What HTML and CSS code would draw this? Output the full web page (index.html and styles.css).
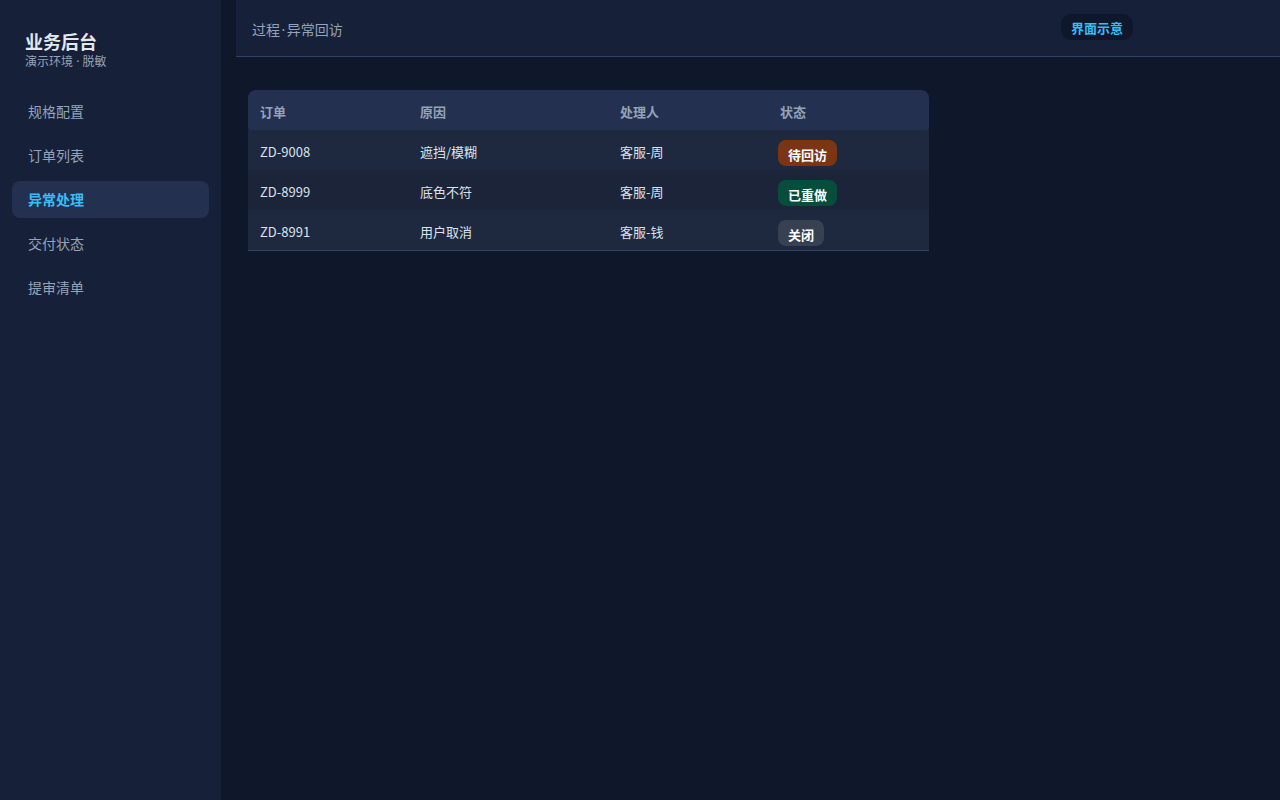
FILE: index.html
```html
<!DOCTYPE html>
<html lang="zh-CN">
<head>
<meta charset="utf-8">
<title>业务后台</title>
<link rel="stylesheet" href="styles.css">
</head>
<body>
<div class="app">
  <aside class="sidebar">
    <div class="brand">
      <div class="brand-title">业务后台</div>
      <div class="brand-sub">演示环境<span class="dot"> · </span>脱敏</div>
    </div>
    <nav class="nav">
      <a class="nav-item">规格配置</a>
      <a class="nav-item">订单列表</a>
      <a class="nav-item active">异常处理</a>
      <a class="nav-item">交付状态</a>
      <a class="nav-item">提审清单</a>
    </nav>
  </aside>
  <main class="main">
    <header class="topbar">
      <div class="crumb">过程<span class="dot crumb-dot">·</span>异常回访</div>
      <span class="tag">界面示意</span>
    </header>
    <section class="content">
      <table class="grid">
        <thead>
          <tr><th class="c1">订单</th><th class="c2">原因</th><th class="c3">处理人</th><th class="c4">状态</th></tr>
        </thead>
        <tbody>
          <tr><td>ZD-9008</td><td>遮挡/模糊</td><td>客服-周</td><td><span class="badge orange">待回访</span></td></tr>
          <tr><td>ZD-8999</td><td>底色不符</td><td>客服-周</td><td><span class="badge green">已重做</span></td></tr>
          <tr><td>ZD-8991</td><td>用户取消</td><td>客服-钱</td><td><span class="badge gray">关闭</span></td></tr>
        </tbody>
      </table>
    </section>
  </main>
</div>
</body>
</html>
```

FILE: styles.css
```css
* { box-sizing: border-box; }
html, body { margin: 0; padding: 0; height: 100%; }
body {
  background: #0f172a;
  font-family: "Noto Sans CJK SC", "Noto Sans", sans-serif;
  color: #e2e8f0;
}
.dot { font-family: "Noto Sans", "DejaVu Sans", sans-serif; }
.crumb-dot { padding: 0 1.5px; }
.app { display: flex; min-height: 800px; }
.sidebar {
  width: 221px;
  flex: none;
  background: #162038;
  padding: 29px 12px 0;
}
.brand { padding: 0 13px; }
.brand-title { font-size: 18px; font-weight: 700; line-height: 24px; color: #e2e8f0; }
.brand-sub { font-size: 12px; line-height: 16px; color: #94a3b8; }
.nav { display: flex; flex-direction: column; gap: 7px; margin-top: 23px; }
.nav-item {
  display: block;
  height: 37px;
  line-height: 37px;
  padding-left: 16px;
  border-radius: 8px;
  font-size: 14px;
  color: #94a3b8;
}
.nav-item.active { background: #243050; color: #38bdf8; font-weight: 700; }
.main { flex: 1; padding-left: 15px; }
.topbar {
  height: 57px;
  background: #162038;
  border-bottom: 1px solid #334261;
  display: flex;
  align-items: center;
  padding: 0 16px;
}
.crumb { font-size: 14px; color: #94a3b8; margin-top: 2px; }
.tag {
  margin-left: auto;
  margin-right: 131px;
  margin-top: -3px;
  background: #0f172a;
  color: #38bdf8;
  font-size: 13px;
  font-weight: 700;
  border-radius: 10px;
  padding: 0 10px;
  height: 26px;
  line-height: 27px;
}
.content { padding: 33px 12px; }
.grid {
  border-collapse: separate;
  border-spacing: 0;
  width: 681px;
  font-size: 13px;
  border-bottom: 1px solid #334261;
}
.grid th {
  background: #243050;
  color: #94a3b8;
  font-weight: 700;
  text-align: left;
  height: 40px;
  padding: 3px 12px 0;
}
.grid th.c1 { width: 160px; border-radius: 8px 0 0 2px; }
.grid th.c2 { width: 200px; }
.grid th.c3 { width: 160px; }
.grid th.c4 { border-radius: 0 8px 2px 0; }
.grid td {
  height: 40px;
  padding: 2px 12px 0;
  color: #dbe3ee;
  background: #1e293f;
}
.grid tbody tr:nth-child(2) td { background: #1b2439; }
.grid td:last-child { padding-left: 10px; padding-top: 6px; }
.badge {
  display: inline-block;
  height: 26px;
  line-height: 29px;
  padding: 0 10px;
  border-radius: 8px;
  color: #fff;
  font-weight: 700;
  font-size: 13px;
}
.badge.orange { background: #7c3514; }
.badge.green { background: #064e3b; }
.badge.gray { background: #374151; }
```
